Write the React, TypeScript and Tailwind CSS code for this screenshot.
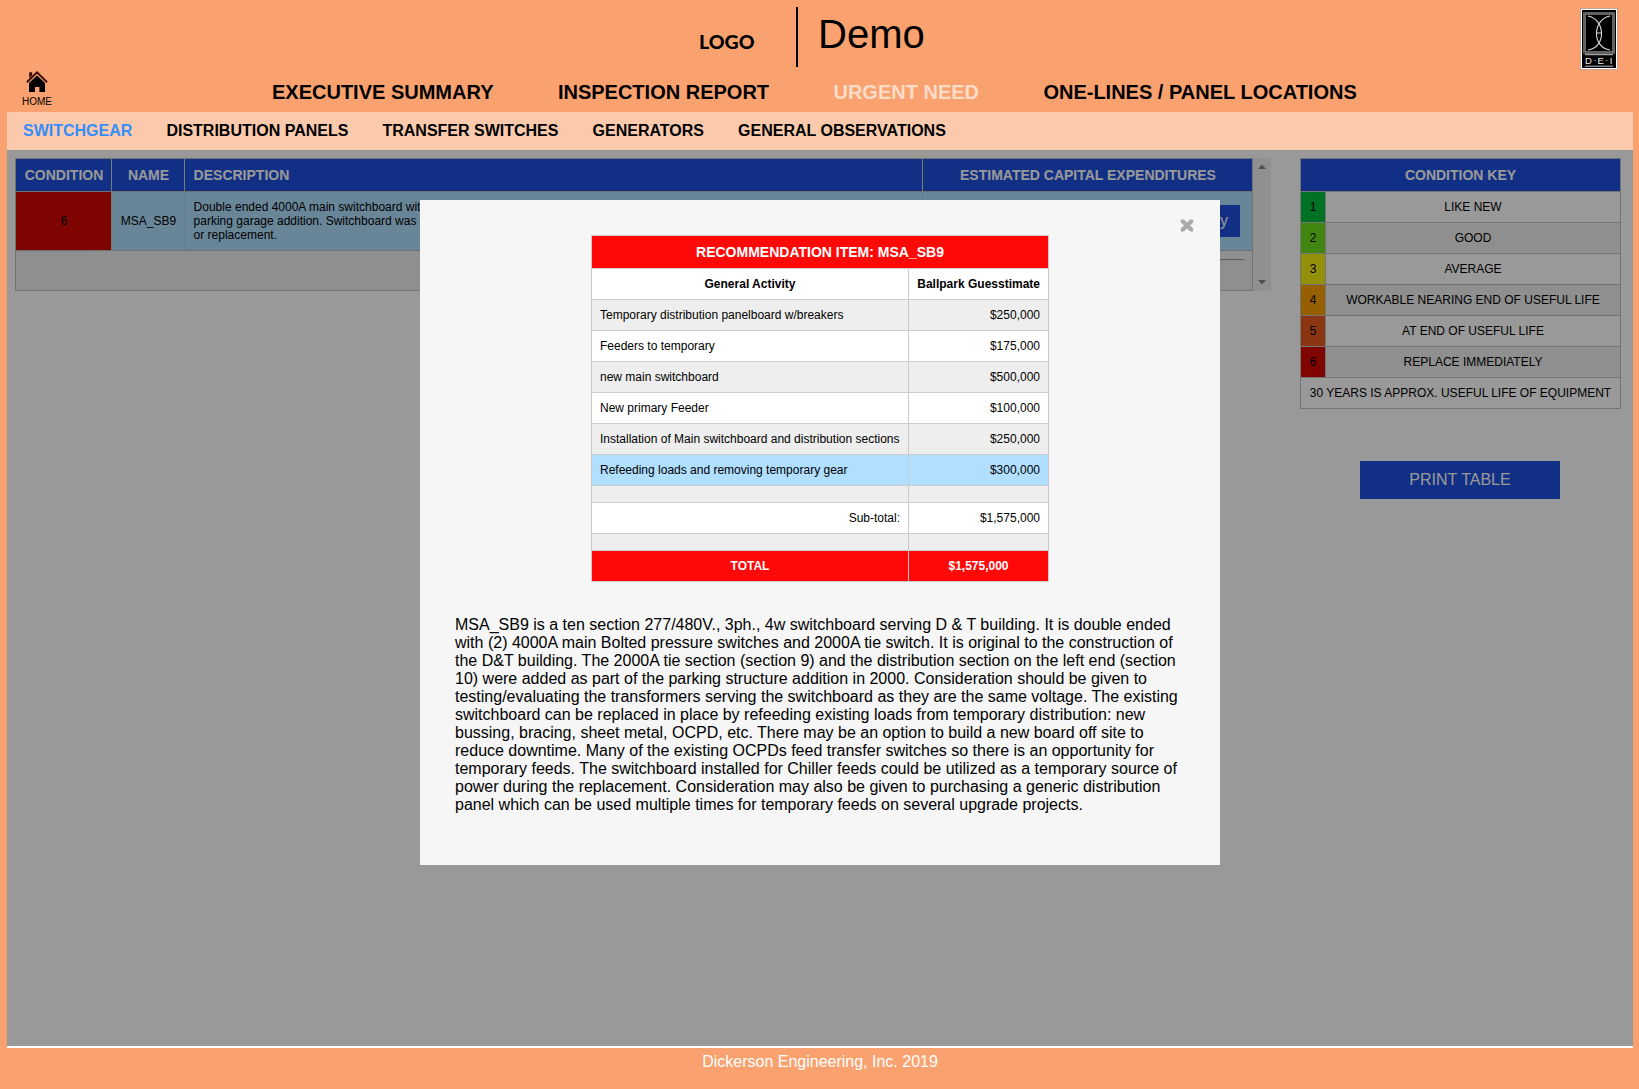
import React from "react";

const nav = [
  { label: "EXECUTIVE SUMMARY" },
  { label: "INSPECTION REPORT" },
  { label: "URGENT NEED", active: true },
  { label: "ONE-LINES / PANEL LOCATIONS" },
];

const subNav = [
  { label: "SWITCHGEAR", active: true },
  { label: "DISTRIBUTION PANELS" },
  { label: "TRANSFER SWITCHES" },
  { label: "GENERATORS" },
  { label: "GENERAL OBSERVATIONS" },
];

const conditions = [
  { n: 1, label: "LIKE NEW", color: "bg-[#00bf40]" },
  { n: 2, label: "GOOD", color: "bg-[#6ee01f]" },
  { n: 3, label: "AVERAGE", color: "bg-[#f5f011]" },
  { n: 4, label: "WORKABLE NEARING END OF USEFUL LIFE", color: "bg-[#fa9e00]" },
  { n: 5, label: "AT END OF USEFUL LIFE", color: "bg-[#e65a20]" },
  { n: 6, label: "REPLACE IMMEDIATELY", color: "bg-[#d50800]" },
];

const activities = [
  { name: "Temporary distribution panelboard w/breakers", cost: "$250,000", bg: "bg-[#eeeeee]" },
  { name: "Feeders to temporary", cost: "$175,000", bg: "bg-white" },
  { name: "new main switchboard", cost: "$500,000", bg: "bg-[#eeeeee]" },
  { name: "New primary Feeder", cost: "$100,000", bg: "bg-white" },
  { name: "Installation of Main switchboard and distribution sections", cost: "$250,000", bg: "bg-[#eeeeee]" },
  { name: "Refeeding loads and removing temporary gear", cost: "$300,000", bg: "bg-[#b0dfff]" },
];

const narrative = [
  "MSA_SB9 is a ten section 277/480V., 3ph., 4w switchboard serving D & T building. It is double ended",
  "with (2) 4000A main Bolted pressure switches and 2000A tie switch. It is original to the construction of",
  "the D&T building. The 2000A tie section (section 9) and the distribution section on the left end (section",
  "10) were added as part of the parking structure addition in 2000. Consideration should be given to",
  "testing/evaluating the transformers serving the switchboard as they are the same voltage. The existing",
  "switchboard can be replaced in place by refeeding existing loads from temporary distribution: new",
  "bussing, bracing, sheet metal, OCPD, etc. There may be an option to build a new board off site to",
  "reduce downtime. Many of the existing OCPDs feed transfer switches so there is an opportunity for",
  "temporary feeds. The switchboard installed for Chiller feeds could be utilized as a temporary source of",
  "power during the replacement. Consideration may also be given to purchasing a generic distribution",
  "panel which can be used multiple times for temporary feeds on several upgrade projects.",
];

function HomeIcon() {
  return (
    <svg width="22" height="21" viewBox="0 0 22 21" className="block">
      <path d="M3.2 7V1.2h3v3z" fill="#3a0d08" />
      <path d="M.9 11.2 11 1.4l10.1 9.8" fill="none" stroke="#3a0d08" strokeWidth="2" />
      <path d="M11 4.6 19 12v9h-5.6v-5H9v5H3v-9z" fill="#000" />
    </svg>
  );
}

function DeiLogo() {
  return (
    <svg width="38" height="62" viewBox="0 0 38 62" className="block">
      <rect x=".5" y=".5" width="37" height="61" fill="#fff" stroke="#9a8a80" strokeWidth=".6" />
      <rect x="2" y="2" width="34" height="58" fill="#000" />
      <rect x="4.5" y="5.5" width="29" height="39" fill="none" stroke="#8d8d8d" strokeWidth="2.4" />
      <rect x="4.5" y="5.5" width="29" height="39" fill="none" stroke="#444" strokeWidth=".6" />
      <path d="M8 8c17 3 19 31 0 34M30 8c-17 3-19 31 0 34M16 25h6" fill="none" stroke="#d8d8d8" strokeWidth="1.1" />
      <path d="M5 46.7h28M5 58.2h28" stroke="#c8c8c8" strokeWidth="1" />
      <text x="5" y="56" fontSize="9.5" fill="#eee" fontFamily="Liberation Sans, sans-serif">D</text>
      <text x="13.8" y="55" fontSize="9" fill="#ccc" fontFamily="Liberation Sans, sans-serif">·</text>
      <text x="17.5" y="56" fontSize="9.5" fill="#eee" fontFamily="Liberation Sans, sans-serif">E</text>
      <text x="25" y="55" fontSize="9" fill="#ccc" fontFamily="Liberation Sans, sans-serif">·</text>
      <text x="29.7" y="56" fontSize="9.5" fill="#eee" fontFamily="Liberation Sans, sans-serif">I</text>
    </svg>
  );
}

function Header() {
  return (
    <header className="relative h-[112px]">
      <div className="flex h-[67px] items-start pt-[7px]">
        <div className="w-[796px] pt-[23px] pl-[699px] font-['Lato'] text-[19.5px] leading-[24px] font-black">
          LOGO
        </div>
        <div className="h-[60px] w-[2px] bg-black" />
        <h1 className="pt-[4px] pl-[20px] text-[40px] leading-[46px]">Demo</h1>
      </div>
      <nav className="flex gap-[64.4px] pt-[13px] pl-[272px] text-[20px] leading-[24px] font-bold whitespace-nowrap">
        {nav.map((item) => (
          <a key={item.label} className={item.active ? "text-[#fddcc8]" : "text-black"}>
            {item.label}
          </a>
        ))}
      </nav>
      <a className="absolute top-[71px] left-[22px] flex w-[30px] flex-col items-center">
        <HomeIcon />
        <span className="pt-[4px] text-[10px] leading-[12px]">HOME</span>
      </a>
      <div className="absolute top-[7.5px] left-[1579.5px]">
        <DeiLogo />
      </div>
    </header>
  );
}

function SwitchgearTable() {
  return (
    <div className="flex w-[1256px] shrink-0 items-start">
      <div className="w-[1238px] shrink-0 border border-[#c4c4c4]">
        <div className="flex h-[32px] items-center bg-[#1d4fde] text-[14px] font-bold text-white">
          <div className="flex h-full w-[96px] items-center justify-center border-r border-[#ccc] pl-px">CONDITION</div>
          <div className="flex h-full w-[73px] items-center justify-center border-r border-[#ccc] pl-px">NAME</div>
          <div className="flex h-full w-[738px] items-center border-r border-[#ccc] pl-[8.6px]">DESCRIPTION</div>
          <div className="flex flex-1 items-center justify-center pl-px">ESTIMATED CAPITAL EXPENDITURES</div>
        </div>
        <div className="flex h-[60px] border-y border-[#bbb] bg-[#b0dfff] text-[12px]">
          <div className="flex w-[96px] items-center justify-center border-r border-[#ccc] bg-[#d00800] pl-px">6</div>
          <div className="flex w-[73px] items-center justify-center border-r border-[#b4cfdf] pl-px">MSA_SB9</div>
          <div className="w-[738px] border-r border-[#b4cfdf] pt-[8px] pl-[8.6px] leading-[14px]">
            Double ended 4000A main switchboard with
            <br />
            parking garage addition. Switchboard was
            <br />
            or replacement.
          </div>
          <div className="flex flex-1 justify-end pt-[13px] pr-[12px]">
            <button className="h-[32px] bg-[#1d4fde] px-[12px] text-[16px] text-white">Summary</button>
          </div>
        </div>
        <div className="flex h-[39px] justify-end bg-[#eeeeee] px-2 pt-[8px]">
          <div className="h-px w-[313px] bg-[#999]" />
        </div>
      </div>
      <div className="flex h-[133px] w-[18px] flex-col items-center justify-between bg-[#f1f1f1] py-[6px]">
        <svg width="8" height="5" viewBox="0 0 8 5">
          <path d="M0 5 4 .5 8 5z" fill="#868686" />
        </svg>
        <svg width="8" height="5" viewBox="0 0 8 5">
          <path d="M0 0 4 4.5 8 0z" fill="#868686" />
        </svg>
      </div>
    </div>
  );
}

function ConditionKey() {
  return (
    <aside className="w-[321px]">
      <div className="w-full border border-[#c4c4c4] text-[12px]">
        <div className="flex h-[32px] items-center justify-center bg-[#1d4fde] text-[14px] font-bold text-white">
          CONDITION KEY
        </div>
        {conditions.map((c) => (
          <div key={c.n} className="flex h-[31px] border-t border-[#c4c4c4] odd:bg-[#eeeeee]">
            <div className={"flex w-[24px] items-center justify-center " + c.color}>{c.n}</div>
            <div className="flex flex-1 items-center justify-center border-l border-[#c4c4c4]">{c.label}</div>
          </div>
        ))}
        <div className="flex h-[31px] items-center justify-center border-t border-[#c4c4c4] whitespace-nowrap">
          30 YEARS IS APPROX. USEFUL LIFE OF EQUIPMENT
        </div>
      </div>
      <button className="mt-[52px] ml-[60px] block h-[38px] w-[200px] bg-[#1d4fde] text-[16px] text-white">
        PRINT TABLE
      </button>
    </aside>
  );
}

function Recommendation() {
  const left = "flex w-[317px] items-center border-r border-[#ccc] px-2";
  const right = "flex flex-1 items-center justify-end px-2";
  return (
    <div className="mx-auto w-[458px] border border-[#ccc] bg-white text-[12px] whitespace-nowrap">
      <div className="flex h-[32px] items-center justify-center bg-[#ff0808] text-[14px] font-bold text-white">
        RECOMMENDATION ITEM: MSA_SB9
      </div>
      <div className="flex h-[31px] border-t border-[#ccc] font-bold">
        <div className={left + " justify-center"}>General Activity</div>
        <div className={right}>Ballpark Guesstimate</div>
      </div>
      {activities.map((a) => (
        <div key={a.name} className={"flex h-[31px] border-t border-[#ccc] " + a.bg}>
          <div className={left}>{a.name}</div>
          <div className={right}>{a.cost}</div>
        </div>
      ))}
      <div className="flex h-[17px] border-t border-[#ccc] bg-[#eeeeee]">
        <div className={left} />
      </div>
      <div className="flex h-[31px] border-t border-[#ccc]">
        <div className={left + " justify-end"}>Sub-total:</div>
        <div className={right}>$1,575,000</div>
      </div>
      <div className="flex h-[17px] border-t border-[#ccc] bg-[#eeeeee]">
        <div className={left} />
      </div>
      <div className="flex h-[31px] border-t border-[#ccc] bg-[#ff0808] font-bold text-white">
        <div className={left + " justify-center"}>TOTAL</div>
        <div className="flex flex-1 items-center justify-center">$1,575,000</div>
      </div>
    </div>
  );
}

function Modal() {
  return (
    <div className="absolute inset-0 bg-black/40">
      <div className="relative mt-[50px] ml-[413px] h-[665px] w-[800px] bg-[#f6f6f6] pt-[35px]">
        <button className="absolute top-[19px] right-[26px]" aria-label="Close">
          <svg width="14" height="13" viewBox="0 0 14 13" className="block">
            <path d="M2.3 1.9 11.7 11.1M11.7 1.9 2.3 11.1" stroke="#aaa" strokeWidth="4.2" strokeLinecap="butt" />
            <path d="M2.3 1.9 11.7 11.1M11.7 1.9 2.3 11.1" stroke="#aaa" strokeWidth="3.2" strokeLinecap="round" />
          </svg>
        </button>
        <Recommendation />
        <p className="pt-[34px] pl-[35px] text-[16px] leading-[18px] whitespace-nowrap">
          {narrative.map((line) => (
            <span key={line} className="block">
              {line}
            </span>
          ))}
        </p>
      </div>
    </div>
  );
}

export default function App() {
  return (
    <div className="h-[1089px] w-[1639px] overflow-hidden bg-[#f9a26f] font-['Liberation_Sans',Arial,sans-serif] text-black">
      <Header />
      <div className="mr-[6px] ml-[7px]">
        <nav className="flex h-[38px] gap-[34.1px] bg-[#fbcaad] pt-[10px] pl-[16px] text-[16px] leading-[18px] font-bold whitespace-nowrap">
          {subNav.map((item) => (
            <a key={item.label} className={item.active ? "text-[#348dfa]" : "text-black"}>
              {item.label}
            </a>
          ))}
        </nav>
        <main className="relative h-[896px] bg-white">
          <div className="flex gap-[29px] pt-[8px] pl-[8px]">
            <SwitchgearTable />
            <ConditionKey />
          </div>
          <Modal />
        </main>
        <footer className="border-t-2 border-white pt-[5px] text-center text-[16px] leading-[18px] text-white">
          Dickerson Engineering, Inc. 2019
        </footer>
      </div>
    </div>
  );
}
